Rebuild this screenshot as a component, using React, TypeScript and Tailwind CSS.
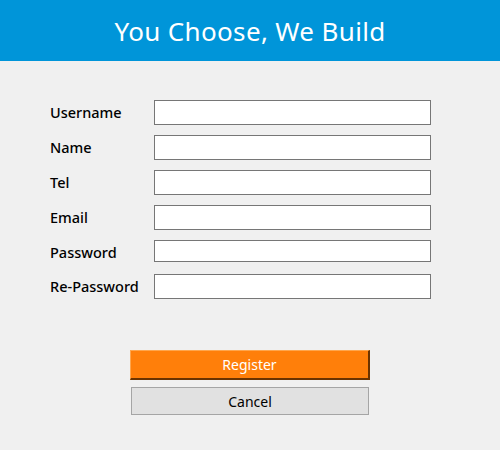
import React from 'react';

const fields = [
  { label: 'Username', type: 'text' },
  { label: 'Name', type: 'text' },
  { label: 'Tel', type: 'text' },
  { label: 'Email', type: 'text' },
  { label: 'Password', type: 'password' },
  { label: 'Re-Password', type: 'password' },
];

export default function App() {
  return (
    <div className="h-[450px] w-[500px] bg-[#f0f0f0] font-['Noto_Sans',sans-serif] text-black">
      <header className="flex h-[61px] items-center justify-center bg-[#0095d9] pt-[1px]">
        <h1 className="text-[26px] font-normal tracking-[0.35px] text-white">You Choose, We Build</h1>
      </header>

      <div className="flex flex-col gap-[10px] pl-[50px] pt-[39px]">
        {fields.map((f, i) => (
          <div key={f.label} className={`flex items-start ${i === 4 ? 'h-[24px]' : 'h-[25px]'}`}>
            <label className="flex h-[25px] w-[104px] items-center text-[14.5px] font-medium">{f.label}</label>
            <input
              type={f.type}
              className={`w-[277px] border border-[#767676] bg-white ${i === 4 ? 'h-[22px]' : 'h-[25px]'}`}
            />
          </div>
        ))}
      </div>

      <div className="mt-[51px] flex flex-col items-center gap-[7px]">
        <button className="h-[30px] w-[240px] border-l border-t border-r-2 border-b-2 border-l-[#ffa64d] border-t-[#ffa64d] border-r-[#6b3300] border-b-[#6b3300] bg-[#ff7f0a] text-[14px] text-white">
          Register
        </button>
        <button className="h-[28px] w-[238px] border border-[#a5a5a5] bg-[#e1e1e1] text-[14px] text-black">
          Cancel
        </button>
      </div>
    </div>
  );
}
